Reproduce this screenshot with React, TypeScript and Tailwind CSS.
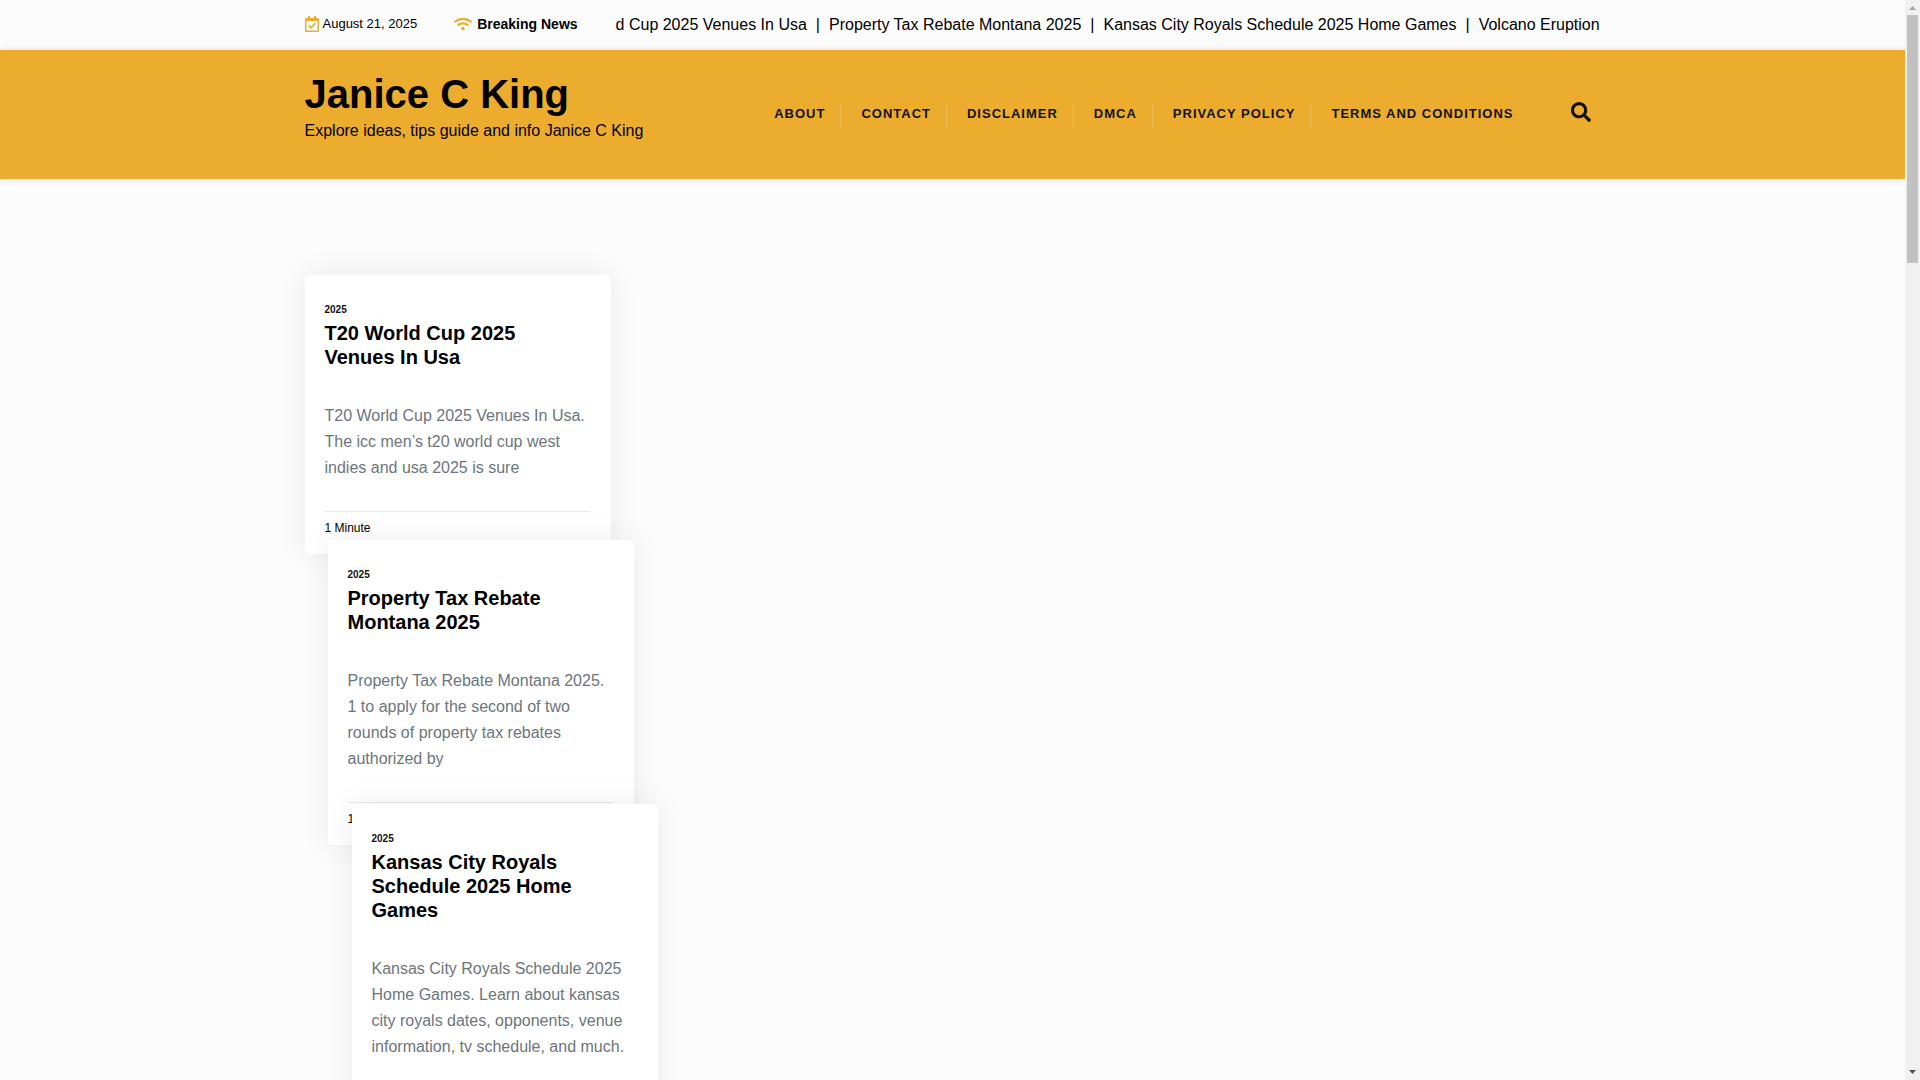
import React from 'react';
import { FaRegCalendarCheck, FaSearch, FaWifi } from 'react-icons/fa';

interface Post {
  title: string;
  excerpt: string;
  readTime?: string;
  offset: string;
}

const navItems = ['About', 'Contact', 'Disclaimer', 'DMCA', 'Privacy Policy', 'Terms and Conditions'];

const headlines = [
  'Property Tax Rebate Montana 2025',
  'Kansas City Royals Schedule 2025 Home Games',
];

const posts: Post[] = [
  {
    title: 'T20 World Cup 2025 Venues In Usa',
    excerpt: 'T20 World Cup 2025 Venues In Usa. The icc men’s t20 world cup west indies and usa 2025 is sure',
    readTime: '1 Minute',
    offset: '',
  },
  {
    title: 'Property Tax Rebate Montana 2025',
    excerpt: 'Property Tax Rebate Montana 2025. 1 to apply for the second of two rounds of property tax rebates authorized by',
    readTime: '1 Minute',
    offset: 'ml-[23px] -mt-[14px]',
  },
  {
    title: 'Kansas City Royals Schedule 2025 Home Games',
    excerpt: 'Kansas City Royals Schedule 2025 Home Games. Learn about kansas city royals dates, opponents, venue information, tv schedule, and much.',
    offset: 'ml-[47px] -mt-[41px]',
  },
];

const TopBar: React.FC = () => (
  <div className="h-[50px] shrink-0">
    <div className="mx-auto flex h-full max-w-[1320px] items-center px-3 pb-[2px]">
      <div className="flex items-center gap-1 text-[13px]">
        <FaRegCalendarCheck className="h-4 w-[14px] text-[#ecac2e]" />
        <span>August 21, 2025</span>
      </div>
      <div className="ml-[37px] flex items-center gap-[5px] text-sm font-bold">
        <FaWifi className="size-[18px] text-[#ecac2e]" />
        <span>Breaking News</span>
      </div>
      <div className="ml-[38px] flex flex-1 gap-[9px] overflow-hidden pt-[2px] text-base whitespace-nowrap">
        <a href="#t20">d Cup 2025 Venues In Usa</a>
        {headlines.map((text) => (
          <React.Fragment key={text}>
            <span>|</span>
            <a href="#news">{text}</a>
          </React.Fragment>
        ))}
        <span>|</span>
        <a href="#volcano">Volcano Eruption</a>
      </div>
    </div>
  </div>
);

const Header: React.FC = () => (
  <header className="h-[129px] shrink-0 bg-[#ecac2e] shadow-[0_0_8px_rgba(0,0,0,0.12)]">
    <div className="mx-auto flex max-w-[1320px] justify-between px-3 pt-5">
      <div>
        <h1 className="text-[40px] leading-[48px] font-bold">
          <a href="#home">Janice C King</a>
        </h1>
        <p className="text-base leading-[26px]">Explore ideas, tips guide and info Janice C King</p>
      </div>
      <div className="flex items-start pt-8 pr-[10px]">
        <nav className="flex">
          {navItems.map((item) => (
            <a
              key={item}
              href="#page"
              className="mt-[2px] mr-5 h-[25px] border-r border-white/20 pr-[15px] text-[13px] leading-5 font-bold tracking-[1px] text-[#121212] uppercase last:mr-0 last:border-0"
            >
              {item}
            </a>
          ))}
        </nav>
        <button type="button" aria-label="Search" className="ml-[42px] text-[#121212]">
          <FaSearch className="size-5" />
        </button>
      </div>
    </div>
  </header>
);

const PostCard: React.FC<{ post: Post }> = ({ post }) => (
  <article
    className={`relative w-[306px] shrink-0 rounded-[5px] bg-white px-5 pt-7 pb-[17px] shadow-[0_0_30px_rgba(0,0,0,0.08)] ${post.offset}`}
  >
    <a href="#2025" className="block text-[10px] leading-[14px] font-bold text-[#121212]">
      2025
    </a>
    <h2 className="mt-1 text-xl leading-6 font-bold">
      <a href="#post">{post.title}</a>
    </h2>
    <p className="mt-[34px] text-base leading-[26px] text-[#6c757d]">{post.excerpt}</p>
    <div className="mt-[30px] border-t border-[#e9e9e9] pt-[7px] text-xs leading-[18px]">{post.readTime}</div>
  </article>
);

const Scrollbar: React.FC = () => (
  <div className="flex w-[15px] shrink-0 flex-col items-center bg-[#f1f1f1]">
    <svg width="15" height="15" viewBox="0 0 15 15">
      <path d="M4 10h7L7.5 6z" fill="#a3a3a3" />
    </svg>
    <div className="h-[23%] w-[11px] bg-[#c1c1c1]" />
    <svg className="mt-auto" width="15" height="15" viewBox="0 0 15 15">
      <path d="M4 5h7L7.5 9z" fill="#505050" />
    </svg>
  </div>
);

const App: React.FC = () => {
  return (
    <div className="flex h-screen overflow-hidden bg-[#fcfcfc] font-['Liberation_Sans',Arial,sans-serif] text-black">
      <div className="flex min-w-0 flex-1 flex-col">
        <TopBar />
        <Header />
        <main className="mx-auto flex w-full max-w-[1320px] flex-col px-3 pt-24">
          {posts.map((post) => (
            <PostCard key={post.title} post={post} />
          ))}
        </main>
      </div>
      <Scrollbar />
    </div>
  );
};

export default App;
